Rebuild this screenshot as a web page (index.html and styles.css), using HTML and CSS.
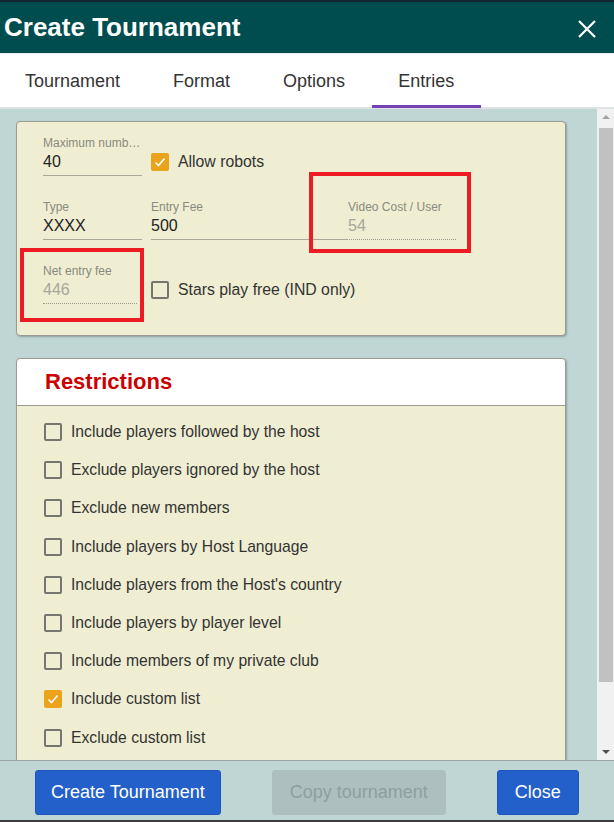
FILE: index.html
```html
<!DOCTYPE html>
<html lang="en">
<head>
    <meta charset="UTF-8">
    <meta name="viewport" content="width=device-width, initial-scale=1.0">
    <title>Create Tournament</title>
    <link rel="stylesheet" href="styles.css">
</head>
<body>
    <div class="topline"></div>
    <div class="titlebar">
        <h1>Create Tournament</h1>
        <span class="close-x">
            <svg width="18" height="18" viewBox="0 0 18 18"><path d="M1 1L17 17M17 1L1 17" stroke="#fff" stroke-width="2.2" fill="none"/></svg>
        </span>
    </div>

    <div class="tabs">
        <span class="tab">Tournament</span>
        <span class="tab">Format</span>
        <span class="tab">Options</span>
        <span class="tab active">Entries</span>
    </div>

    <div class="content">
        <div class="scroll-area">
            <div class="card settings">
                <div class="row">
                    <div class="field narrow">
                        <div class="field-label">Maximum numb&hellip;</div>
                        <div class="field-value">40</div>
                    </div>
                    <label class="check">
                        <span class="box checked"><svg width="14" height="14" viewBox="0 0 14 14"><path d="M2.5 7.5L5.5 10.5L11.5 3.5" stroke="#fff" stroke-width="1.6" fill="none"/></svg></span>
                        Allow robots
                    </label>
                </div>
                <div class="row">
                    <div class="field narrow">
                        <div class="field-label">Type</div>
                        <div class="field-value">XXXX</div>
                    </div>
                    <div class="field wide">
                        <div class="field-label">Entry Fee</div>
                        <div class="field-value">500</div>
                    </div>
                    <div class="field mid disabled">
                        <div class="field-label">Video Cost / User</div>
                        <div class="field-value">54</div>
                    </div>
                </div>
                <div class="row">
                    <div class="field narrow-sm disabled">
                        <div class="field-label">Net entry fee</div>
                        <div class="field-value">446</div>
                    </div>
                    <label class="check">
                        <span class="box"></span>
                        Stars play free (IND only)
                    </label>
                </div>

                <!-- highlight marks -->
                <div class="mark mark-video"></div>
                <div class="mark mark-net"></div>
            </div>

            <div class="card restrictions">
                <h2>Restrictions</h2>
                <ul class="check-list">
                    <li><span class="box"></span>Include players followed by the host</li>
                    <li><span class="box"></span>Exclude players ignored by the host</li>
                    <li><span class="box"></span>Exclude new members</li>
                    <li><span class="box"></span>Include players by Host Language</li>
                    <li><span class="box"></span>Include players from the Host's country</li>
                    <li><span class="box"></span>Include players by player level</li>
                    <li><span class="box"></span>Include members of my private club</li>
                    <li><span class="box checked"><svg width="14" height="14" viewBox="0 0 14 14"><path d="M2.5 7.5L5.5 10.5L11.5 3.5" stroke="#fff" stroke-width="1.6" fill="none"/></svg></span>Include custom list</li>
                    <li><span class="box"></span>Exclude custom list</li>
                </ul>
            </div>
        </div>

        <div class="scrollbar">
            <span class="arrow up"></span>
            <div class="track">
                <div class="thumb"></div>
            </div>
            <span class="arrow down"></span>
        </div>
    </div>

    <div class="actions">
        <button class="btn">Create Tournament</button>
        <button class="btn disabled">Copy tournament</button>
        <button class="btn">Close</button>
    </div>
</body>
</html>
```

FILE: styles.css
```css
body {
    margin: 0;
    padding: 0;
    width: 614px;
    height: 822px;
    overflow: hidden;
    font-family: "Liberation Sans", Arial, sans-serif;
    background-color: #c0d6d5;
    color: #333;
}
.topline {
    height: 2px;
    background-color: #142433;
}
.titlebar {
    height: 51px;
    background-color: #004d4f;
    display: flex;
    align-items: center;
    justify-content: space-between;
    padding: 0 18px 0 4px;
    border-bottom: 1px solid #e8eeee;
}
.titlebar h1 {
    margin: 0;
    color: white;
    font-size: 26px;
    font-weight: bold;
}
.close-x {
    display: flex;
    margin-top: 2px;
}
.tabs {
    height: 53px;
    background-color: white;
    display: flex;
    border-bottom: 2px solid #dde3e3;
}
.tab {
    display: flex;
    align-items: center;
    padding: 4px 26.5px 0 26.5px;
    font-size: 18px;
    color: #333;
    border-bottom: 3px solid transparent;
    margin-bottom: -1px;
}
.tab:first-child {
    padding-left: 25px;
}
.tab.active {
    border-bottom-color: #7440b4; /* purple underline */
}
.content {
    display: flex;
    height: 651px;
}
.scroll-area {
    flex: 1;
    overflow: hidden;
    padding: 12px 31px 0 16px;
}
.card {
    background-color: #efeed2;
    border: 1px solid #9a9a92;
    border-radius: 4px;
    box-shadow: 1px 1px 2px rgba(0, 0, 0, 0.25);
}
.settings {
    position: relative;
    padding: 14px 26px 29px 26px;
    height: 170px;
}
.row {
    display: flex;
    align-items: flex-end;
    margin-bottom: 24px;
}
.row:last-of-type {
    margin-bottom: 0;
}
.field {
    padding-bottom: 3px;
    border-bottom: 1px solid #a9a89a;
    margin-right: 9px;
}
.field.narrow { width: 99px; }
.field.narrow-sm { width: 94px; margin-right: 14px; }
.field.wide { width: 196px; margin-right: 0; }
.field.mid { width: 109px; margin-right: 0; }
.field.mid .field-label,
.field.mid .field-value { margin-left: 1px; }
.field.disabled {
    border-bottom: 1px dotted #9a9a8a;
}
.field-label {
    font-size: 12px;
    line-height: 14px;
    color: #8a8a80;
    white-space: nowrap;
}
.field-value {
    font-size: 16px;
    line-height: 20px;
    color: #222;
    margin-top: 2px;
}
.field.disabled .field-value {
    color: #a7a79c;
}
.check {
    display: flex;
    align-items: center;
    font-size: 15.8px;
    color: #333;
    margin-bottom: 5px;
}
.box {
    width: 18px;
    height: 18px;
    box-sizing: border-box;
    border: 2px solid #767670;
    border-radius: 2px;
    margin-right: 9px;
    display: flex;
    align-items: center;
    justify-content: center;
    flex-shrink: 0;
}
.box.checked {
    background-color: #eba31c;
    border-color: #eba31c;
}
.mark {
    position: absolute;
    border: 4px solid #ed1c24;
    box-sizing: border-box;
}
.mark-video {
    left: 292px;
    top: 50px;
    width: 162px;
    height: 81px;
}
.mark-net {
    left: 3px;
    top: 126px;
    width: 124px;
    height: 74px;
}
.restrictions {
    margin-top: 22px;
    overflow: hidden;
}
.restrictions h2 {
    margin: 0;
    background-color: white;
    color: #cc0000;
    font-size: 22px;
    font-weight: bold;
    height: 46px;
    line-height: 46px;
    padding-left: 28px;
    border-bottom: 1px solid #9a9a92;
    border-radius: 4px 4px 0 0;
}
.check-list {
    list-style: none;
    margin: 0;
    padding: 7px 0 40px 27px;
}
.check-list li {
    display: flex;
    align-items: center;
    height: 38.2px;
    font-size: 15.7px;
    color: #333;
}
.scrollbar {
    width: 17px;
    background-color: #f1f1f1;
    display: flex;
    flex-direction: column;
    align-items: center;
}
.arrow {
    width: 0;
    height: 0;
    border-left: 4px solid transparent;
    border-right: 4px solid transparent;
    margin: 6px 0;
}
.arrow.up {
    border-bottom: 4px solid #a3a3a3;
}
.arrow.down {
    border-top: 4px solid #505050;
}
.track {
    flex: 1;
    width: 100%;
    padding: 3px 1px 0 2px;
    box-sizing: border-box;
}
.thumb {
    height: 554px;
    background-color: #c1c1c1;
}
.actions {
    border-top: 1px solid #9aa5a5;
    border-bottom: 2px solid #3c3c3c;
    display: flex;
    align-items: flex-start;
    gap: 51px;
    padding: 9px 0 0 35px;
    box-sizing: border-box;
    height: 62px;
}
.btn {
    height: 45px;
    padding: 0 17px;
    font-family: "Liberation Sans", Arial, sans-serif;
    font-size: 18px;
    color: white;
    white-space: nowrap;
    background-color: #2460c9;
    border: 1px solid #1d55b8;
    border-radius: 3px;
    cursor: pointer;
}
.btn:first-child {
    padding: 0 15px;
}
.btn.disabled {
    background-color: #adbfbf;
    border-color: #adbfbf;
    color: #8e9f9f;
}
```
